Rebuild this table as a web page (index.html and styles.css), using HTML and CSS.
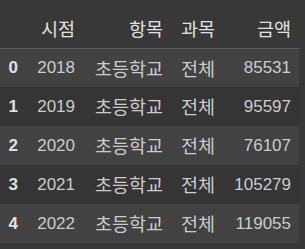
FILE: index.html
```html
<!DOCTYPE html>
<html lang="ko">
<head>
<meta charset="utf-8">
<link rel="stylesheet" href="styles.css">
</head>
<body>
<table class="df">
  <colgroup>
    <col class="c0"><col class="c1"><col class="c2"><col class="c3"><col class="c4">
  </colgroup>
  <thead>
    <tr><th></th><th class="ko">시점</th><th class="ko">항목</th><th class="ko">과목</th><th class="ko">금액</th></tr>
  </thead>
  <tbody>
    <tr class="odd"><th>0</th><td>2018</td><td class="ko">초등학교</td><td class="ko">전체</td><td>85531</td></tr>
    <tr class="even"><th>1</th><td>2019</td><td class="ko">초등학교</td><td class="ko">전체</td><td>95597</td></tr>
    <tr class="odd"><th>2</th><td>2020</td><td class="ko">초등학교</td><td class="ko">전체</td><td>76107</td></tr>
    <tr class="even"><th>3</th><td>2021</td><td class="ko">초등학교</td><td class="ko">전체</td><td>105279</td></tr>
    <tr class="odd"><th>4</th><td>2022</td><td class="ko">초등학교</td><td class="ko">전체</td><td>119055</td></tr>
  </tbody>
</table>
</body>
</html>
```
FILE: styles.css
```css
html, body {
  margin: 0;
  padding: 0;
  background: #383838;
  height: 100%;
}
.df {
  border-collapse: collapse;
  table-layout: fixed;
  width: 299px;
  font-family: "Liberation Sans", "Noto Sans CJK KR", sans-serif;
  font-size: 17px;
  color: #cccccc;
}
.c0 { width: 26px; }
.c1 { width: 57px; }
.c2 { width: 88px; }
.c3 { width: 52px; }
.c4 { width: 76px; }
.df th, .df td {
  text-align: right;
  padding: 0 8px 0 0;
  white-space: nowrap;
  overflow: visible;
}
.df .ko {
  font-family: "Noto Sans CJK KR", sans-serif;
  font-size: 18.5px;
  line-height: 1.2;
}
.df thead th {
  height: 48px;
  box-sizing: border-box;
  padding-top: 8px;
  vertical-align: middle;
  font-weight: normal;
  color: #e0e0e0;
  border-bottom: 1px solid #5a5a5a;
}
.df tbody tr { height: 39px; }
.df tbody th {
  font-weight: bold;
  color: #e0e0e0;
}
.df tbody td, .df tbody th { vertical-align: middle; }
.odd { background: #424242; }
.even { background: #353535; }
```
